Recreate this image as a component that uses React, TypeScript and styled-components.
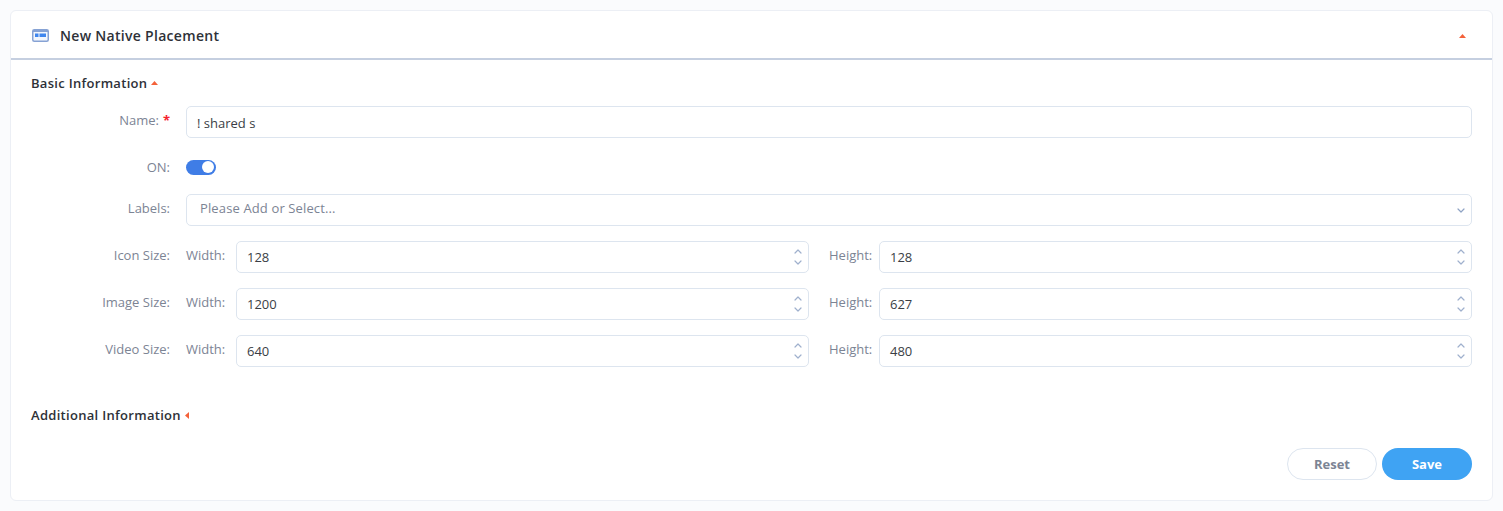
import React from 'react';
import styled, { createGlobalStyle } from 'styled-components';

const GlobalStyle = createGlobalStyle`
  html, body {
    margin: 0;
    padding: 0;
    background: #fafbfd;
    font-family: "Open Sans", "Liberation Sans", sans-serif;
  }
`;

const Page = styled.div`
  padding: 10px;
  height: 511px;
  box-sizing: border-box;
`;

const Card = styled.div`
  height: 491px;
  box-sizing: border-box;
  background: #fff;
  border: 1px solid #eceff5;
  border-radius: 6px;
  display: flex;
  flex-direction: column;
`;

const CardHeader = styled.div`
  height: 49px;
  box-sizing: border-box;
  border-bottom: 2px solid #c5cfe0;
  display: flex;
  align-items: center;
  padding: 2px 26px 0 21px;
  flex-shrink: 0;
`;

const CardTitle = styled.div`
  font-size: 14px;
  font-weight: 600;
  letter-spacing: 0.3px;
  color: #2e3138;
  margin-left: 11px;
  flex: 1;
  line-height: 20px;
`;

const CardBody = styled.div`
  padding: 13px 20px 0 20px;
  flex: 1;
  display: flex;
  flex-direction: column;
`;

const SectionHeading = styled.div<{ $mt?: number }>`
  display: flex;
  align-items: center;
  gap: 4px;
  font-size: 13px;
  font-weight: 600;
  letter-spacing: 0.3px;
  color: #2e3138;
  line-height: 20px;
  height: 20px;
  margin-top: ${({ $mt }) => $mt ?? 0}px;
`;

const Row = styled.div<{ $mt: number }>`
  display: grid;
  grid-template-columns: 139px 1fr;
  column-gap: 16px;
  align-items: center;
  margin-top: ${({ $mt }) => $mt}px;
`;

const Label = styled.div<{ $shift?: number }>`
  font-size: 13px;
  color: #7c8494;
  text-align: right;
  line-height: 16px;
  position: relative;
  top: ${({ $shift }) => $shift ?? -2}px;
`;

const Star = styled.span`
  color: #f5222d;
  margin-left: 4px;
  font-weight: 700;
`;

const Input = styled.div`
  height: 32px;
  box-sizing: border-box;
  border: 1px solid #dde5ef;
  border-radius: 5px;
  display: flex;
  align-items: center;
  padding: 0 10px;
  font-size: 13px;
  color: #3a3e46;
  background: #fff;
  min-width: 0;
`;

const NameValue = styled.span`
  position: relative;
  top: 1px;
`;

const SelectBox = styled(Input)`
  justify-content: space-between;
  padding: 0 6px 0 13px;
  color: #7c8494;
`;

const Placeholder = styled.span`
  position: relative;
  top: -2px;
  letter-spacing: 0.13px;
`;

const Toggle = styled.div`
  width: 30px;
  height: 15px;
  border-radius: 8px;
  background: #3f7de6;
  position: relative;
  &::after {
    content: '';
    position: absolute;
    right: 2px;
    top: 1.5px;
    width: 12px;
    height: 12px;
    border-radius: 50%;
    background: #fff;
  }
`;

const SizeFields = styled.div`
  display: grid;
  grid-template-columns: 50px 573px 20px 50px 593px;
  align-items: center;
`;

const SubLabel = styled.div<{ $column: number }>`
  grid-column: ${({ $column }) => $column};
  font-size: 13px;
  color: #7c8494;
  line-height: 16px;
  position: relative;
  top: -2px;
  white-space: nowrap;
`;

const NumberInput = styled(Input)<{ $column: number }>`
  grid-column: ${({ $column }) => $column};
  justify-content: space-between;
  padding: 0 6px 0 10px;
`;

const Spinner = styled.div`
  display: flex;
  flex-direction: column;
  gap: 6px;
`;

const Footer = styled.div`
  margin-top: 23px;
  display: flex;
  justify-content: flex-end;
  gap: 5px;
`;

const ResetButton = styled.button`
  width: 90px;
  height: 32px;
  box-sizing: border-box;
  border-radius: 16px;
  border: 1px solid #dde5ef;
  background: #fff;
  color: #7c8494;
  font: 700 13px "Open Sans", sans-serif;
`;

const SaveButton = styled(ResetButton)`
  border: none;
  background: #3fa3f3;
  color: #fff;
`;

const Arrow = ({ direction }: { direction: 'up' | 'left' }) =>
  direction === 'up' ? (
    <svg width={7} height={4} viewBox="0 0 7 4">
      <path d="M3.5 0L7 4H0z" fill="#f4623a" />
    </svg>
  ) : (
    <svg width={4} height={7} viewBox="0 0 4 7">
      <path d="M0 3.5L4 0v7z" fill="#f4623a" />
    </svg>
  );

const Chevron = ({ up = false, color = '#9fb0cd' }: { up?: boolean; color?: string }) => (
  <svg width={8} height={5} viewBox="0 0 8 5" fill="none">
    <path
      d={up ? 'M1 4L4 1l3 3' : 'M1 1l3 3 3-3'}
      stroke={color}
      strokeWidth={1.2}
      strokeLinecap="round"
      strokeLinejoin="round"
    />
  </svg>
);

const PlacementIcon = () => (
  <svg width={17} height={13} viewBox="0 0 17 13">
    <rect x={0.75} y={0.75} width={15.5} height={11.5} rx={1.5} fill="#f2f6fd" stroke="#86a2d4" strokeWidth={1.5} />
    <rect x={1} y={1} width={15} height={2} fill="#86a2d4" />
    <rect x={3} y={4.5} width={3.5} height={3.5} fill="#3f86ee" />
    <rect x={7.5} y={4.5} width={6.5} height={3.5} fill="#3f86ee" />
  </svg>
);

const sizes = [
  { label: 'Icon Size:', width: '128', height: '128' },
  { label: 'Image Size:', width: '1200', height: '627' },
  { label: 'Video Size:', width: '640', height: '480' },
];

const Stepper = () => (
  <Spinner>
    <Chevron up />
    <Chevron />
  </Spinner>
);

const App = () => (
  <Page>
    <GlobalStyle />
    <Card>
      <CardHeader>
        <PlacementIcon />
        <CardTitle>New Native Placement</CardTitle>
        <Arrow direction="up" />
      </CardHeader>
      <CardBody>
        <SectionHeading>
          Basic Information <Arrow direction="up" />
        </SectionHeading>
        <Row $mt={13}>
          <Label>
            Name:<Star>*</Star>
          </Label>
          <Input>
            <NameValue>! shared s</NameValue>
          </Input>
        </Row>
        <Row $mt={21}>
          <Label $shift={0}>ON:</Label>
          <Toggle />
        </Row>
        <Row $mt={19}>
          <Label>Labels:</Label>
          <SelectBox>
            <Placeholder>Please Add or Select...</Placeholder>
            <Chevron color="#8fa3c4" />
          </SelectBox>
        </Row>
        {sizes.map((size) => (
          <Row $mt={15} key={size.label}>
            <Label>{size.label}</Label>
            <SizeFields>
              <SubLabel $column={1}>Width:</SubLabel>
              <NumberInput $column={2}>
                <span>{size.width}</span>
                <Stepper />
              </NumberInput>
              <SubLabel $column={4}>Height:</SubLabel>
              <NumberInput $column={5}>
                <span>{size.height}</span>
                <Stepper />
              </NumberInput>
            </SizeFields>
          </Row>
        ))}
        <SectionHeading $mt={38}>
          Additional Information <Arrow direction="left" />
        </SectionHeading>
        <Footer>
          <ResetButton>Reset</ResetButton>
          <SaveButton>Save</SaveButton>
        </Footer>
      </CardBody>
    </Card>
  </Page>
);

export default App;
